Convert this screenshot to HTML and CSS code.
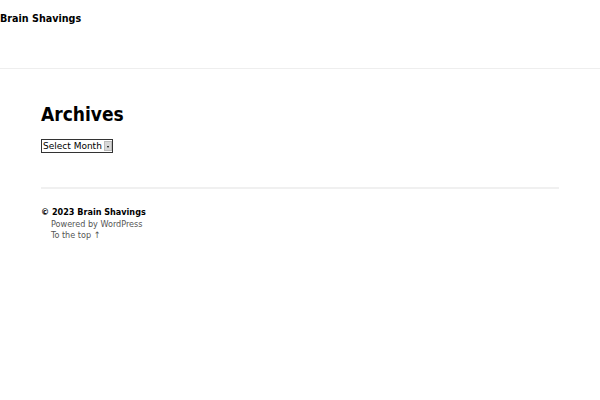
FILE: index.html
```html
<!DOCTYPE html>
<html lang="en">
<head>
  <meta charset="UTF-8" />
  <title>Archives – Brain Shavings</title>
  <link rel="stylesheet" href="styles.css">
</head>
<body>
  <header class="site-header">
    <a class="site-title" href="#">Brain Shavings</a>
  </header>

  <main class="site-main">
    <h1 class="page-title">Archives</h1>
    <div class="select-wrap">
      <select class="archive-select">
        <option>Select Month</option>
      </select>
      <span class="select-arrow"></span>
    </div>
  </main>

  <footer class="site-footer">
    <p class="copy">&copy; 2023 <a href="#">Brain Shavings</a></p>
    <p class="powered"><a href="#">Powered by WordPress</a></p>
    <p class="to-top"><a href="#">To the top &uarr;</a></p>
  </footer>
</body>
</html>
```

FILE: styles.css
```css
body {
  margin: 0;
  font-family: "DejaVu Sans Condensed", "DejaVu Sans", sans-serif;
  color: #000;
  background: #fff;
}

a {
  color: inherit;
  text-decoration: none;
}

.site-header {
  height: 69px;
  border-bottom: 1px solid #eeeeee;
  padding-top: 13px;
  box-sizing: border-box;
}

.site-title {
  display: block;
  font-family: "DejaVu Sans", sans-serif;
  font-size: 9.6px;
  line-height: 12px;
  font-weight: bold;
}

.site-main {
  margin: 0 41px;
  padding-top: 33px;
  padding-bottom: 34px;
  border-bottom: 2px solid #f0f0f0;
}

.page-title {
  font-size: 19px;
  font-weight: bold;
  margin: 0;
  line-height: 24px;
}

/* old-style select with a small grey arrow button */
.select-wrap {
  position: relative;
  display: inline-block;
  vertical-align: top;
  margin-top: 13px;
}

.archive-select {
  display: block;
  appearance: none;
  -webkit-appearance: none;
  font-family: "DejaVu Sans", sans-serif;
  font-size: 9px;
  line-height: 12px;
  width: 72px;
  height: 14px;
  padding: 0 10px 0 1px;
  margin: 0;
  color: #000;
  border: 1px solid #333;
  border-radius: 0;
  background: #fff;
}

.select-arrow {
  position: absolute;
  right: 1px;
  top: 2px;
  width: 8px;
  height: 10px;
  background: #d8d8d8;
  border: 1px solid #bbb;
  box-sizing: border-box;
}

.select-arrow::after {
  content: "";
  position: absolute;
  left: 2px;
  top: 4px;
  border-left: 1.5px solid transparent;
  border-right: 1.5px solid transparent;
  border-top: 2px solid #000;
}

.site-footer {
  margin: 0 41px;
  padding-top: 18px;
  font-size: 9px;
  line-height: 11.5px;
}

.site-footer p {
  margin: 0;
}

.copy {
  font-weight: bold;
}

.powered,
.to-top {
  padding-left: 10px;
  color: #555;
}
```
